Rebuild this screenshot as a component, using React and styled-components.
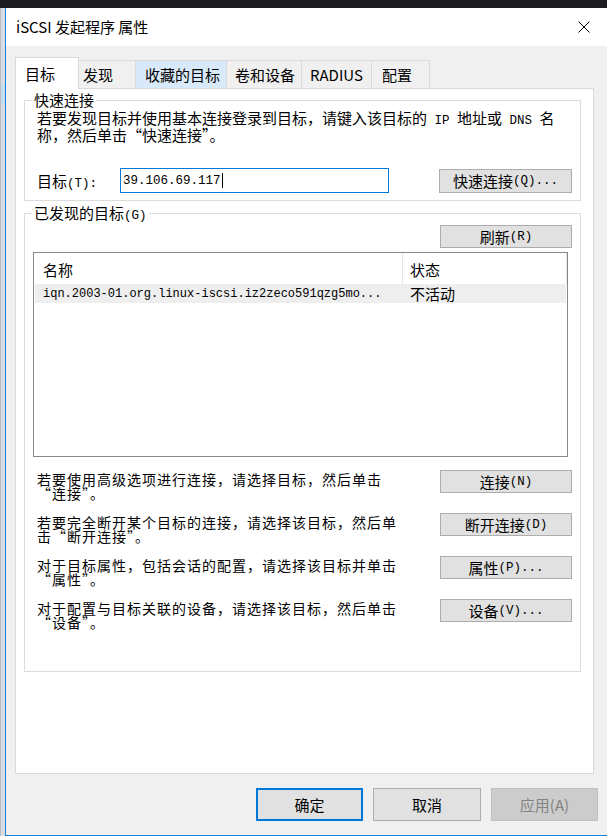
import React from 'react';
import styled, { createGlobalStyle } from 'styled-components';

const CJK = `"Noto Sans CJK SC", "Noto Sans", sans-serif`;
const MONO = `"Liberation Mono", "Noto Sans CJK SC", monospace`;

const GlobalStyle = createGlobalStyle`
  html, body {
    margin: 0;
    padding: 0;
  }
  body {
    background: #f0f0f0;
    font-family: ${CJK};
    color: #000;
    overflow: hidden;
  }
  * {
    box-sizing: border-box;
  }
`;

const Screen = styled.div`
  width: 607px;
  height: 836px;
  display: flex;
  flex-direction: column;
`;

const TopBar = styled.div`
  height: 8px;
  flex: none;
  background: #1d1d21;
`;

const Desktop = styled.div`
  flex: 1;
  display: flex;
  min-height: 0;
`;

// sliver of the window that sits behind the dialog
const BackWindow = styled.div`
  width: 5px;
  flex: none;
  background: linear-gradient(
    to bottom,
    #d9dce0 0,
    #d9dce0 76px,
    #c6dcef 76px,
    #c6dcef 96px,
    #d9dce0 96px
  );
  border-left: 1px solid #b8bcc2;
`;

const Window = styled.div`
  flex: 1;
  min-width: 0;
  display: flex;
  flex-direction: column;
  border-left: 1px solid #1883d7;
  border-bottom: 1px solid #1883d7;
`;

const TitleBar = styled.div`
  height: 38px;
  flex: none;
  background: #fff;
  display: flex;
  align-items: center;
`;

const Title = styled.div`
  flex: 1;
  padding-left: 10px;
  font-size: 15px;
  line-height: 20px;
  white-space: nowrap;
`;

const CloseButton = styled.div`
  width: 46px;
  height: 38px;
  display: flex;
  align-items: center;
  justify-content: center;
`;

const Body = styled.div`
  flex: 1;
  display: flex;
  flex-direction: column;
  padding: 11px 9px 0 9px;
  background: #f0f0f0;
`;

const TabStrip = styled.div`
  height: 31px;
  flex: none;
  display: flex;
  align-items: flex-end;
`;

const Tab = styled.div`
  width: ${p => p.$w}px;
  height: ${p => (p.$active ? 32 : 28)}px;
  margin-bottom: ${p => (p.$active ? -1 : 0)}px;
  padding-left: ${p => p.$pl}px;
  display: flex;
  align-items: center;
  font-size: 15px;
  line-height: 20px;
  white-space: nowrap;
  background: ${p => (p.$active ? '#fff' : p.$hover ? '#d8eaf9' : '#f0f0f0')};
  border-top: 1px solid #d9d9d9;
  border-right: 1px solid #d9d9d9;
  border-left: ${p => (p.$active ? '1px solid #d9d9d9' : 'none')};
  position: relative;
  z-index: ${p => (p.$active ? 1 : 0)};
`;

const Panel = styled.div`
  height: 686px;
  flex: none;
  margin-right: 4px;
  padding: 2px 12px 0 8px;
  background: #fff;
  border: 1px solid #d9d9d9;
`;

const Group = styled.fieldset`
  margin: ${p => p.$mt || 0}px 0 0 0;
  padding: 0 8px ${p => p.$pb}px 8px;
  border: 1px solid #dcdcdc;
  min-width: 0;
`;

const Legend = styled.legend`
  padding: 0 2px;
  margin-left: -1px;
  font-size: 15px;
  line-height: 18px;
  white-space: nowrap;
`;

// half-width latin in the SimSun-like monospaced look
const Asc = styled.span`
  font-family: "Liberation Mono", monospace;
  font-size: 12.5px;
  line-height: 0;
  white-space: pre;
`;

const Desc = styled.p`
  margin: 0 0 0 4px;
  font-size: 15px;
  line-height: 17px;
  white-space: nowrap;
  font-feature-settings: "fwid";
`;

const ConnectRow = styled.div`
  height: 25px;
  margin-top: 25px;
  padding-left: 4px;
  display: flex;
  align-items: center;
`;

const FieldLabel = styled.span`
  width: 83px;
  flex: none;
  font-size: 15px;
  line-height: 18px;
  white-space: nowrap;
`;

const TextBox = styled.div`
  width: 269px;
  height: 25px;
  flex: none;
  padding-left: 2px;
  display: flex;
  align-items: center;
  border: 1px solid #0078d7;
  font-family: ${MONO};
  font-size: 12.5px;
`;

const Caret = styled.span`
  width: 1px;
  height: 15px;
  margin-left: 1px;
  background: #000;
`;

const Button = styled.div`
  width: ${p => p.$w || 132}px;
  height: ${p => p.$h || 23}px;
  flex: none;
  margin-left: auto;
  display: flex;
  align-items: center;
  justify-content: center;
  background: #e1e1e1;
  border: 1px solid #adadad;
  font-size: 15px;
  line-height: 18px;
  white-space: nowrap;
`;

const ToolRow = styled.div`
  margin-top: 3px;
  display: flex;
`;

const ListView = styled.div`
  height: 205px;
  margin: 4px 4px 0 0;
  display: flex;
  flex-direction: column;
  background: #fff;
  border: 1px solid #828790;
`;

const ListHeader = styled.div`
  height: 31px;
  flex: none;
  display: grid;
  grid-template-columns: 369px 1fr;
`;

const HeaderCell = styled.div`
  padding: 1px 0 0 ${p => p.$pl}px;
  display: flex;
  align-items: center;
  font-size: 15px;
  border-right: 1px solid #e5e5e5;
`;

const ListRow = styled.div`
  height: 19px;
  margin: 0 1px;
  display: grid;
  grid-template-columns: 368px 1fr;
  align-items: center;
  background: #eeeeee;
`;

const NameCell = styled.div`
  padding-left: 8px;
  font-family: ${MONO};
  font-size: 12px;
  white-space: nowrap;
  overflow: hidden;
`;

const StatusCell = styled.div`
  padding-left: 7px;
  font-size: 15px;
  line-height: 18px;
`;

const Actions = styled.div`
  margin-top: 13px;
  display: flex;
  flex-direction: column;
  gap: 20px;
`;

const ActionRow = styled.div`
  height: 23px;
  display: flex;
  align-items: flex-start;
`;

const ActionText = styled.p`
  margin: 2px 0 0 4px;
  font-size: 14px;
  letter-spacing: 1px;
  line-height: 14px;
  white-space: nowrap;
  font-feature-settings: "fwid";
`;

const Footer = styled.div`
  margin-top: 14px;
  display: flex;
  justify-content: flex-end;
  gap: 10px;
`;

const DialogButton = styled.div`
  width: ${p => p.$w}px;
  height: 33px;
  display: flex;
  align-items: center;
  justify-content: center;
  font-size: 15px;
  color: ${p => (p.$disabled ? '#838383' : '#000')};
  background: ${p => (p.$disabled ? '#cccccc' : '#e1e1e1')};
  border: ${p =>
    p.$default ? '2px solid #0078d7' : p.$disabled ? '1px solid #bfbfbf' : '1px solid #adadad'};
`;

const tabs = [
  { label: '目标', w: 64, pl: 9, active: true },
  { label: '发现', w: 57, pl: 4 },
  { label: '收藏的目标', w: 91, pl: 9, hover: true },
  { label: '卷和设备', w: 75, pl: 8 },
  { label: 'RADIUS', w: 70, pl: 8 },
  { label: '配置', w: 58, pl: 10 },
];

const actions = [
  { lines: ['若要使用高级选项进行连接，请选择目标，然后单击', '“连接”。'], cjk: '连接', key: '(N)' },
  { lines: ['若要完全断开某个目标的连接，请选择该目标，然后单', '击“断开连接”。'], cjk: '断开连接', key: '(D)' },
  { lines: ['对于目标属性，包括会话的配置，请选择该目标并单击', '“属性”。'], cjk: '属性', key: '(P)...' },
  { lines: ['对于配置与目标关联的设备，请选择该目标，然后单击', '“设备”。'], cjk: '设备', key: '(V)...' },
];

export default function App() {
  return (
    <Screen>
      <GlobalStyle />
      <TopBar />
      <Desktop>
        <BackWindow />
        <Window>
          <TitleBar>
            <Title>iSCSI 发起程序 属性</Title>
            <CloseButton>
              <svg width="12" height="12" viewBox="0 0 12 12">
                <path d="M0.5 0.5 L11.5 11.5 M11.5 0.5 L0.5 11.5" stroke="#000" strokeWidth="1" fill="none" />
              </svg>
            </CloseButton>
          </TitleBar>
          <Body>
            <TabStrip>
              {tabs.map(t => (
                <Tab key={t.label} $w={t.w} $pl={t.pl} $active={t.active} $hover={t.hover}>
                  {t.label}
                </Tab>
              ))}
            </TabStrip>
            <Panel>
              <Group $pb={7}>
                <Legend>快速连接</Legend>
                <Desc>
                  若要发现目标并使用基本连接登录到目标，请键入该目标的<Asc> IP </Asc>地址或<Asc> DNS </Asc>名
                  <br />
                  称，然后单击“快速连接”。
                </Desc>
                <ConnectRow>
                  <FieldLabel>
                    目标<Asc>(T):</Asc>
                  </FieldLabel>
                  <TextBox>
                    39.106.69.117
                    <Caret />
                  </TextBox>
                  <Button $w={133} $h={24}>
                    快速连接<Asc>(Q)...</Asc>
                  </Button>
                </ConnectRow>
              </Group>
              <Group $mt={3} $pb={49}>
                <Legend>
                  已发现的目标<Asc>(G)</Asc>
                </Legend>
                <ToolRow>
                  <Button>
                    刷新<Asc>(R)</Asc>
                  </Button>
                </ToolRow>
                <ListView>
                  <ListHeader>
                    <HeaderCell $pl={9}>名称</HeaderCell>
                    <HeaderCell $pl={7}>状态</HeaderCell>
                  </ListHeader>
                  <ListRow>
                    <NameCell>iqn.2003-01.org.linux-iscsi.iz2zeco591qzg5mo...</NameCell>
                    <StatusCell>不活动</StatusCell>
                  </ListRow>
                </ListView>
                <Actions>
                  {actions.map(a => (
                    <ActionRow key={a.cjk}>
                      <ActionText>
                        {a.lines[0]}
                        <br />
                        {a.lines[1]}
                      </ActionText>
                      <Button>
                        {a.cjk}
                        <Asc>{a.key}</Asc>
                      </Button>
                    </ActionRow>
                  ))}
                </Actions>
              </Group>
            </Panel>
            <Footer>
              <DialogButton $w={107} $default>确定</DialogButton>
              <DialogButton $w={108}>取消</DialogButton>
              <DialogButton $w={107} $disabled>应用(A)</DialogButton>
            </Footer>
          </Body>
        </Window>
      </Desktop>
    </Screen>
  );
}
